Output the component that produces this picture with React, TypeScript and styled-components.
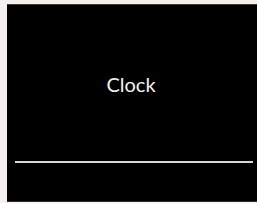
import styled, { createGlobalStyle } from "styled-components";

const GlobalStyle = createGlobalStyle`
  html, body {
    margin: 0;
    padding: 0;
    background: #f4f0ef;
  }
`;

function App() {
  return (
    <Page>
      <GlobalStyle />
      <Screen>
        <TitleArea>
          <Title>Clock</Title>
        </TitleArea>
        <Divider />
      </Screen>
    </Page>
  );
}

const Page = styled.div`
  width: 257px;
  height: 203px;
  padding: 4px 0 1px 7px;
  box-sizing: border-box;
  display: flex;
`;

const Screen = styled.div`
  flex: 1;
  background-color: #000000;
  border-top: 1px solid #4a3530;
  border-bottom: 1px solid #3a2a26;
  display: flex;
  flex-direction: column;
`;

const TitleArea = styled.div`
  height: 156px;
  display: flex;
  align-items: center;
  justify-content: center;
  padding-top: 1px;
  box-sizing: border-box;
`;

const Title = styled.span`
  font-family: "Lato", "Open Sans", sans-serif;
  font-weight: 400;
  font-size: 20px;
  color: #f2f2f2;
  margin-right: 2px;
`;

const Divider = styled.div`
  height: 2px;
  background-color: #d8d8d8;
  margin: 0 4px 0 8px;
`;

export default App;
